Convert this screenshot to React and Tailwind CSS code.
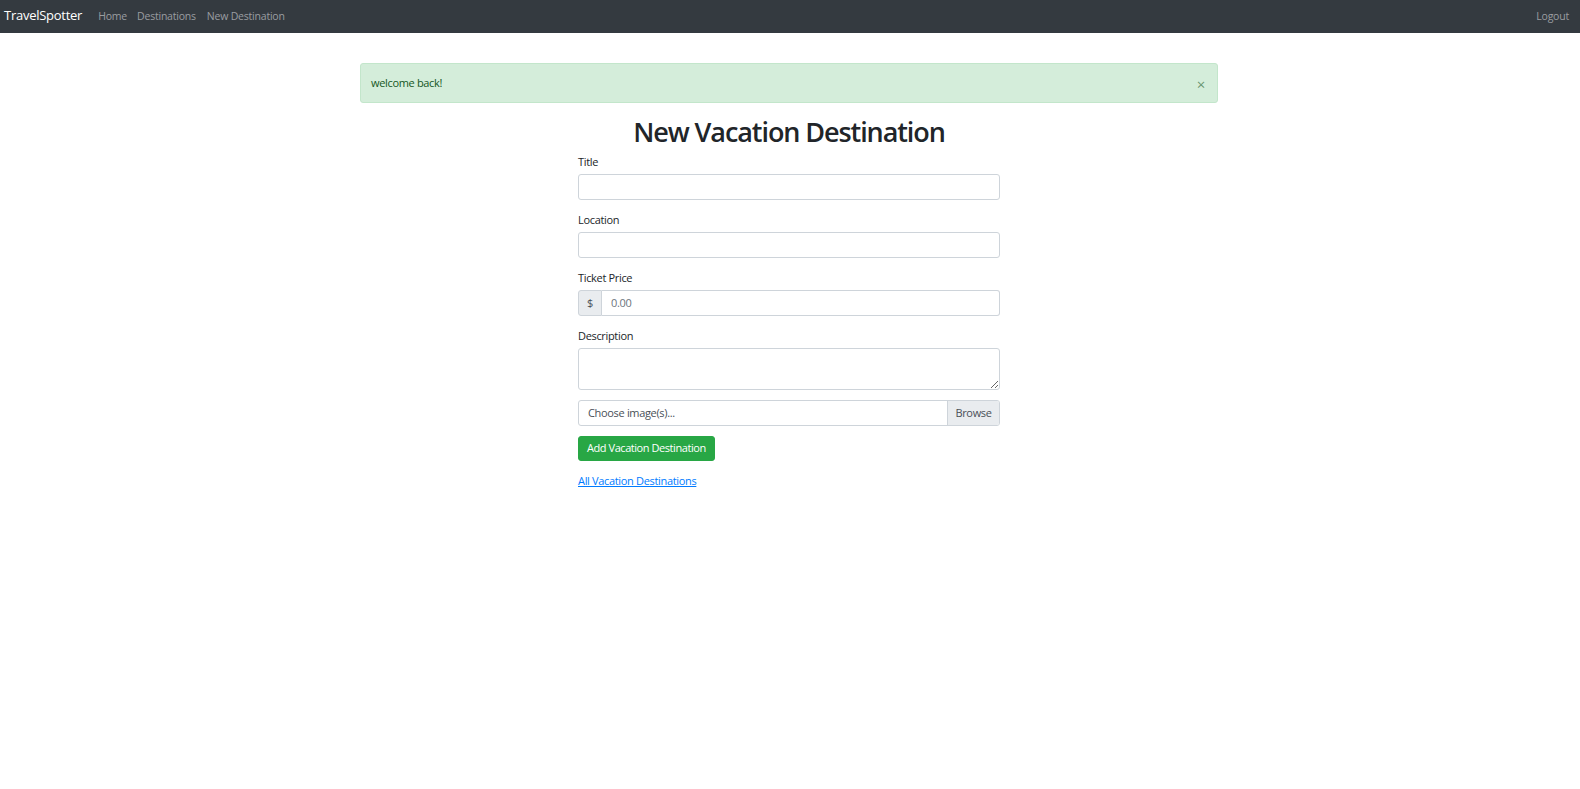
import { useState } from 'react'

function App() {
    const [showAlert, setShowAlert] = useState(true)

    return (
        <div className="min-h-screen bg-white text-[#212529] font-['Open_Sans','Noto_Sans',sans-serif]">
            {/* Navbar */}
            <nav className="h-[33px] bg-[#343a40] flex items-center justify-between pl-[4px] pr-[11px]">
                <div className="flex items-center">
                    <a href="#" className="text-white text-[13px] tracking-[-0.02em] mr-[16px] -mt-[1px]">TravelSpotter</a>
                    <a href="#" className="text-[#9a9da0] text-[10.5px] tracking-[-0.02em] mr-[10px]">Home</a>
                    <a href="#" className="text-[#9a9da0] text-[10.5px] tracking-[-0.02em] mr-[11px]">Destinations</a>
                    <a href="#" className="text-[#9a9da0] text-[10.5px] tracking-[-0.02em]">New Destination</a>
                </div>
                <a href="#" className="text-[#9a9da0] text-[10.5px] tracking-[-0.02em]">Logout</a>
            </nav>

            <div className="pr-[2px]">
                <div className="w-[858px] mx-auto pt-[30px]">
                    {showAlert && (
                        <div className="h-[40px] bg-[#d4edda] border border-[#c3e6cb] rounded-[3px] text-[#155724] text-[11px] tracking-[-0.03em] flex items-center justify-between pl-[10px] pr-[12px]">
                            <span>welcome back!</span>
                            <button onClick={() => setShowAlert(false)} className="text-[#155724]/60 text-[15px] leading-none pt-[2px]">×</button>
                        </div>
                    )}

                    <h1 className="text-center text-[27px] font-semibold tracking-[-0.04em] leading-[28px] mt-[15px] mb-[7px]">New Vacation Destination</h1>

                    {/* Form */}
                    <form className="w-[422px] mx-auto text-[11px] tracking-[-0.03em]">
                        <label className="block leading-[14px] pt-[2px] mb-[5px]">Title</label>
                        <input type="text" className="block w-full h-[26px] border border-[#ced4da] rounded-[3px] mb-[11px] px-[9px] outline-none" />

                        <label className="block leading-[14px] pt-[2px] mb-[5px]">Location</label>
                        <input type="text" className="block w-full h-[26px] border border-[#ced4da] rounded-[3px] mb-[11px] px-[9px] outline-none" />

                        <label className="block leading-[14px] pt-[2px] mb-[5px]">Ticket Price</label>
                        <div className="flex h-[26px] mb-[11px]">
                            <span className="w-[24px] flex items-center justify-center bg-[#e9ecef] border border-[#ced4da] rounded-l-[3px] text-[#495057]">$</span>
                            <input type="text" placeholder="0.00" className="flex-1 border border-l-0 border-[#ced4da] rounded-r-[3px] px-[9px] outline-none placeholder:text-[#6c757d]" />
                        </div>

                        <label className="block leading-[14px] pt-[2px] mb-[5px]">Description</label>
                        <textarea className="block w-full h-[42px] border border-[#ced4da] rounded-[3px] mb-[10px] px-[9px] outline-none"></textarea>

                        <div className="flex h-[26px] border border-[#ced4da] rounded-[3px] mb-[10px] overflow-hidden">
                            <span className="flex-1 flex items-center px-[9px] text-[#495057]">Choose image(s)...</span>
                            <span className="w-[52px] flex items-center justify-center bg-[#e9ecef] border-l border-[#ced4da] text-[#495057]">Browse</span>
                        </div>

                        <div>
                            <button type="button" className="h-[25px] px-[8px] bg-[#28a745] border border-[#28a745] rounded-[3px] text-white tracking-[-0.04em]">Add Vacation Destination</button>
                        </div>

                        <div className="mt-[12px] leading-[16px]">
                            <a href="#" className="text-[#007bff] underline">All Vacation Destinations</a>
                        </div>
                    </form>
                </div>
            </div>
        </div>
    )
}

export default App
